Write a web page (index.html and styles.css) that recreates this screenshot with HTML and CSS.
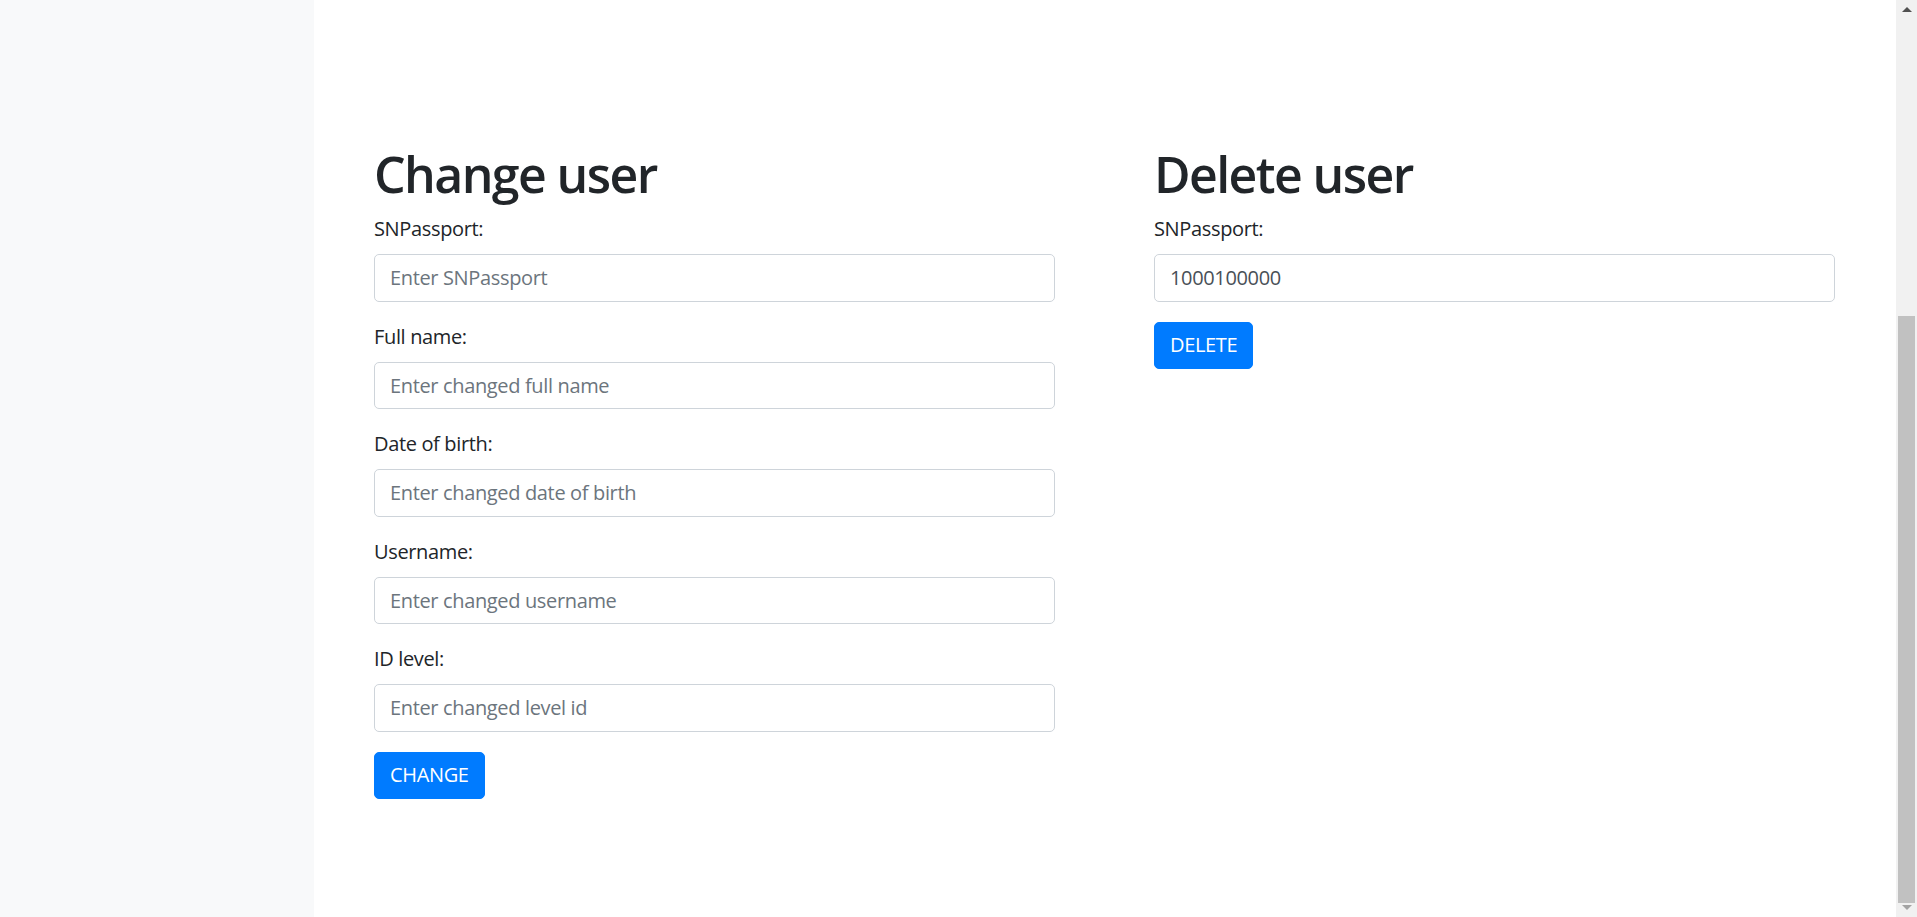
FILE: index.html
```html
<!DOCTYPE html>
<html lang="en">
<head>
<meta charset="utf-8">
<title>Users</title>
<link rel="stylesheet" href="styles.css">
</head>
<body>
<div class="layout">
  <aside class="sidebar"></aside>
  <main class="main">
    <div class="row">
      <section class="col">
        <h1 class="title">Change user</h1>
        <form class="form">
          <div class="group">
            <label class="label">SNPassport:</label>
            <input class="input" type="text" placeholder="Enter SNPassport">
          </div>
          <div class="group">
            <label class="label">Full name:</label>
            <input class="input" type="text" placeholder="Enter changed full name">
          </div>
          <div class="group">
            <label class="label">Date of birth:</label>
            <input class="input" type="text" placeholder="Enter changed date of birth">
          </div>
          <div class="group">
            <label class="label">Username:</label>
            <input class="input" type="text" placeholder="Enter changed username">
          </div>
          <div class="group">
            <label class="label">ID level:</label>
            <input class="input" type="text" placeholder="Enter changed level id">
          </div>
          <button class="btn" type="button">CHANGE</button>
        </form>
      </section>
      <section class="col">
        <h1 class="title">Delete user</h1>
        <form class="form">
          <div class="group">
            <label class="label">SNPassport:</label>
            <input class="input" type="text" value="1000100000">
          </div>
          <button class="btn" type="button">DELETE</button>
        </form>
      </section>
    </div>
  </main>
  <div class="scrollbar">
    <div class="arrow arrow-up"></div>
    <div class="track"><div class="thumb"></div></div>
    <div class="arrow arrow-down"></div>
  </div>
</div>
</body>
</html>
```
FILE: styles.css
```css
* { box-sizing: border-box; }
html, body { margin: 0; padding: 0; height: 100%; overflow: hidden; }
body {
  font-family: "Open Sans", "Noto Sans", "Liberation Sans", sans-serif;
  font-size: 20px;
  line-height: 1.5;
  letter-spacing: -0.35px;
  color: #212529;
  background: #fff;
}
.layout { display: flex; height: 917px; }
.sidebar { width: 314px; flex: none; background: #f8f9fa; }
.main { flex: 1; padding: 144px 61px 0 60px; }
.row { display: grid; grid-template-columns: 681px 681px; column-gap: 99px; }
.title {
  margin: 0 0 10px;
  font-size: 50px;
  font-weight: 600;
  letter-spacing: -1.6px;
  line-height: 1.2;
}
.form { margin: 0; }
.group { margin-bottom: 20px; }
.label { display: block; margin-bottom: 10px; line-height: 30px; }
.input {
  display: block;
  width: 100%;
  height: 47.5px;
  padding: 7.5px 15px;
  font: inherit;
  letter-spacing: inherit;
  color: #495057;
  background: #fff;
  border: 1px solid #ced4da;
  border-radius: 5px;
  outline: none;
}
.input::placeholder { color: #6c757d; opacity: 1; }
.btn {
  display: inline-block;
  height: 47.5px;
  padding: 7.5px 15px;
  font: inherit;
  letter-spacing: inherit;
  color: #fff;
  background: #007bff;
  border: 1px solid #007bff;
  border-radius: 5px;
}
.scrollbar {
  width: 21px; flex: none; background: #f1f1f1;
  display: flex; flex-direction: column; align-items: center;
}
.arrow { width: 0; height: 0; border-left: 5px solid transparent; border-right: 5px solid transparent; }
.arrow-up { margin-top: 7px; border-bottom: 5px solid #505050; }
.arrow-down { margin-bottom: 7px; border-top: 5px solid #a3a3a3; }
.track { flex: 1; width: 100%; display: flex; flex-direction: column; justify-content: flex-end; padding: 0 2px 2px; }
.thumb { height: 587px; background: #c1c1c1; }
```
